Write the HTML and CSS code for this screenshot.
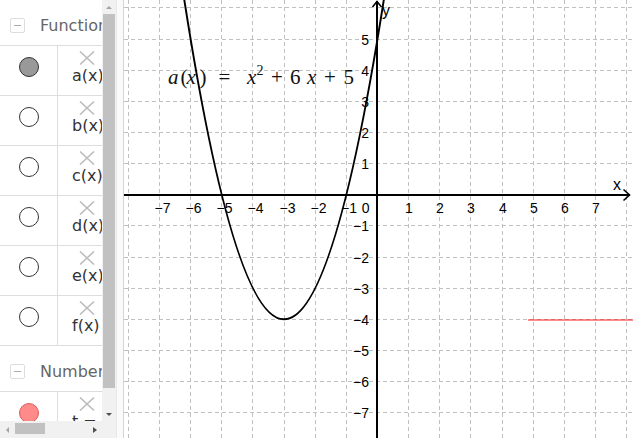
FILE: index.html
```html
<!DOCTYPE html>
<html lang="en">
<head>
    <meta charset="UTF-8">
    <meta name="viewport" content="width=device-width, initial-scale=1.0">
    <title>GeoGebra - Parabola</title>
    <link rel="stylesheet" href="styles.css">
</head>
<body>
    <div class="app">
        <div class="algebra">
            <div class="av-list">
                <div class="group-header">
                    <span class="toggle"></span>
                    <span class="group-title">Functions</span>
                </div>
                <div class="item">
                    <div class="marble-cell"><span class="marble marble-on"></span></div>
                    <div class="item-body">
                        <svg class="delete" viewBox="0 0 16 14"><path d="M1 0.5 L15 13.5 M15 0.5 L1 13.5"/></svg>
                        <div class="formula">a(x) = x² + 6x + 5</div>
                    </div>
                </div>
                <div class="item">
                    <div class="marble-cell"><span class="marble"></span></div>
                    <div class="item-body">
                        <svg class="delete" viewBox="0 0 16 14"><path d="M1 0.5 L15 13.5 M15 0.5 L1 13.5"/></svg>
                        <div class="formula">b(x) = x² + 2x + 1</div>
                    </div>
                </div>
                <div class="item">
                    <div class="marble-cell"><span class="marble"></span></div>
                    <div class="item-body">
                        <svg class="delete" viewBox="0 0 16 14"><path d="M1 0.5 L15 13.5 M15 0.5 L1 13.5"/></svg>
                        <div class="formula">c(x) = x² − 4x + 3</div>
                    </div>
                </div>
                <div class="item">
                    <div class="marble-cell"><span class="marble"></span></div>
                    <div class="item-body">
                        <svg class="delete" viewBox="0 0 16 14"><path d="M1 0.5 L15 13.5 M15 0.5 L1 13.5"/></svg>
                        <div class="formula">d(x) = x² − 2x − 3</div>
                    </div>
                </div>
                <div class="item">
                    <div class="marble-cell"><span class="marble"></span></div>
                    <div class="item-body">
                        <svg class="delete" viewBox="0 0 16 14"><path d="M1 0.5 L15 13.5 M15 0.5 L1 13.5"/></svg>
                        <div class="formula">e(x) = x² + 4x</div>
                    </div>
                </div>
                <div class="item">
                    <div class="marble-cell"><span class="marble"></span></div>
                    <div class="item-body">
                        <svg class="delete" viewBox="0 0 16 14"><path d="M1 0.5 L15 13.5 M15 0.5 L1 13.5"/></svg>
                        <div class="formula">f(x) = x² − 1</div>
                    </div>
                </div>
                <div class="group-header group-header-split">
                    <span class="toggle"></span>
                    <span class="group-title">Numbers</span>
                </div>
                <div class="item">
                    <div class="marble-cell"><span class="marble marble-red"></span></div>
                    <div class="item-body">
                        <svg class="delete" viewBox="0 0 16 14"><path d="M1 0.5 L15 13.5 M15 0.5 L1 13.5"/></svg>
                        <div class="formula">t = −4</div>
                    </div>
                </div>
            </div>

            <div class="vscroll">
                <div class="arrow"><span class="tri tri-up"></span></div>
                <div class="vthumb"></div>
                <div class="spacer"></div>
                <div class="arrow"><span class="tri tri-down"></span></div>
            </div>
            <div class="hscroll">
                <div class="arrow"><span class="tri tri-left"></span></div>
                <div class="hthumb"></div>
                <div class="spacer"></div>
                <div class="arrow"><span class="tri tri-right"></span></div>
            </div>
            <div class="corner"></div>
        </div>

        <div class="splitter"></div>

        <div class="graphics">
            <svg class="plot" width="509" height="438" viewBox="0 0 509 438">
                <g class="grid">
                    <line x1="4.5" y1="0" x2="4.5" y2="438"/>
                    <line x1="35.5" y1="0" x2="35.5" y2="438"/>
                    <line x1="66.5" y1="0" x2="66.5" y2="438"/>
                    <line x1="97.5" y1="0" x2="97.5" y2="438"/>
                    <line x1="128.5" y1="0" x2="128.5" y2="438"/>
                    <line x1="160.5" y1="0" x2="160.5" y2="438"/>
                    <line x1="191.5" y1="0" x2="191.5" y2="438"/>
                    <line x1="222.5" y1="0" x2="222.5" y2="438"/>
                    <line x1="284.5" y1="0" x2="284.5" y2="438"/>
                    <line x1="315.5" y1="0" x2="315.5" y2="438"/>
                    <line x1="346.5" y1="0" x2="346.5" y2="438"/>
                    <line x1="378.5" y1="0" x2="378.5" y2="438"/>
                    <line x1="409.5" y1="0" x2="409.5" y2="438"/>
                    <line x1="440.5" y1="0" x2="440.5" y2="438"/>
                    <line x1="471.5" y1="0" x2="471.5" y2="438"/>
                    <line x1="502.5" y1="0" x2="502.5" y2="438"/>

                    <line x1="0" y1="7.5" x2="509" y2="7.5"/>
                    <line x1="0" y1="39.5" x2="509" y2="39.5"/>
                    <line x1="0" y1="70.5" x2="509" y2="70.5"/>
                    <line x1="0" y1="101.5" x2="509" y2="101.5"/>
                    <line x1="0" y1="132.5" x2="509" y2="132.5"/>
                    <line x1="0" y1="163.5" x2="509" y2="163.5"/>
                    <line x1="0" y1="225.5" x2="509" y2="225.5"/>
                    <line x1="0" y1="257.5" x2="509" y2="257.5"/>
                    <line x1="0" y1="288.5" x2="509" y2="288.5"/>
                    <line x1="0" y1="319.5" x2="509" y2="319.5"/>
                    <line x1="0" y1="350.5" x2="509" y2="350.5"/>
                    <line x1="0" y1="381.5" x2="509" y2="381.5"/>
                    <line x1="0" y1="412.5" x2="509" y2="412.5"/>
                </g>

                <line class="track" x1="404" y1="320" x2="509" y2="320"/>

                <g class="axes">
                    <line x1="253" y1="1" x2="253" y2="438"/>
                    <line x1="0" y1="195" x2="506" y2="195"/>
                    <polyline points="248.5,7 253,1.5 257.5,7"/>
                    <polyline points="499.5,189.5 505.5,195 499.5,200.5"/>
                </g>

                <!-- a(x) = x^2 + 6x + 5 from x=-7 to x=1 as one quadratic bezier -->
                <path class="curve" d="M35.45,-179.05 Q160.05,817.75 284.65,-179.05"/>

                <g class="ticks">
                    <text x="38.5" y="213">−7</text>
                    <text x="69.5" y="213">−6</text>
                    <text x="100.5" y="213">−5</text>
                    <text x="131.5" y="213">−4</text>
                    <text x="163.5" y="213">−3</text>
                    <text x="194.5" y="213">−2</text>
                    <text x="225" y="213">−1</text>
                    <text x="285" y="213">1</text>
                    <text x="316" y="213">2</text>
                    <text x="347" y="213">3</text>
                    <text x="379" y="213">4</text>
                    <text x="410" y="213">5</text>
                    <text x="441" y="213">6</text>
                    <text x="472" y="213">7</text>
                </g>
                <g class="ticks ticks-y">
                    <text x="245.5" y="213">0</text>
                    <text x="245" y="45">5</text>
                    <text x="245" y="76">4</text>
                    <text x="245" y="107">3</text>
                    <text x="245" y="138">2</text>
                    <text x="245" y="169">1</text>
                    <text x="245" y="231">−1</text>
                    <text x="245" y="263">−2</text>
                    <text x="245" y="294">−3</text>
                    <text x="245" y="325">−4</text>
                    <text x="245" y="356">−5</text>
                    <text x="245" y="387">−6</text>
                    <text x="245" y="418">−7</text>
                </g>

                <text class="axis-name" x="489" y="190">x</text>
                <text class="axis-name" x="258" y="16">y</text>

                <text class="eq" y="84"><tspan class="var" x="44">a</tspan><tspan x="56.5">(</tspan><tspan class="var" x="62.5">x</tspan><tspan x="75.5">)</tspan><tspan x="94.5">=</tspan><tspan class="var" x="123">x</tspan><tspan class="sup" x="132.5" y="75">2</tspan><tspan x="147" y="84">+</tspan><tspan x="166">6</tspan><tspan class="var" x="183">x</tspan><tspan x="200">+</tspan><tspan x="219.5">5</tspan></text>
            </svg>
        </div>
    </div>
</body>
</html>
```

FILE: styles.css
```css
* {
    box-sizing: border-box;
}
html, body {
    margin: 0;
    height: 100%;
}
body {
    overflow: hidden;
    background: #fff;
    font-family: "DejaVu Sans", "Noto Sans", sans-serif;
}
.app {
    display: flex;
    height: 438px;
}

/* algebra view */
.algebra {
    width: 116px;
    flex-shrink: 0;
    display: grid;
    grid-template-columns: 102px 14px;
    grid-template-rows: 421px 17px;
}
.av-list {
    overflow: hidden;
}
.group-header {
    height: 45px;
    display: flex;
    align-items: center;
    gap: 15px;
    padding: 6px 0 0 10px;
}
.group-header-split {
    height: 46px;
    border-top: 1px solid #ddd;
}
.toggle {
    width: 15px;
    height: 15px;
    flex-shrink: 0;
    border: 1px solid #ddd;
    border-radius: 2px;
    display: flex;
    align-items: center;
    justify-content: center;
}
.toggle::after {
    content: "";
    width: 7px;
    height: 1px;
    background: #aaa;
}
.group-title {
    font-size: 16px;
    color: #666;
    white-space: nowrap;
}
.item {
    display: flex;
    height: 50px;
    border-top: 1px solid #ddd;
}
.marble-cell {
    width: 58px;
    flex-shrink: 0;
    border-right: 1px solid #ddd;
    padding-top: 11px;
    display: flex;
    justify-content: center;
    align-items: flex-start;
}
.marble {
    width: 20px;
    height: 20px;
    border-radius: 50%;
    border: 1px solid #333;
    background: #fff;
}
.marble-on {
    background: #999;
}
.marble-red {
    background: #ff8a8a;
    border-color: #dd5b5b;
}
.item-body {
    flex: 1;
    min-width: 0;
    padding: 5px 0 0 14px;
    white-space: nowrap;
}
.delete {
    display: block;
    width: 16px;
    height: 14px;
    margin-left: 7px;
    fill: none;
    stroke: #bdbdbd;
    stroke-width: 1.6;
}
.formula {
    font-size: 16px;
    line-height: 21px;
    color: #333;
}

/* scrollbars */
.vscroll {
    background: #f1f1f1;
    display: flex;
    flex-direction: column;
    align-items: center;
}
.hscroll {
    background: #f1f1f1;
    display: flex;
    align-items: center;
}
.corner {
    background: #f1f1f1;
}
.arrow {
    width: 14px;
    height: 14px;
    flex-shrink: 0;
    display: flex;
    align-items: center;
    justify-content: center;
}
.spacer {
    flex: 1;
}
.vthumb {
    width: 12px;
    height: 374px;
    background: #c1c1c1;
}
.hthumb {
    width: 30px;
    height: 11px;
    margin-left: 1px;
    align-self: flex-start;
    margin-top: 2px;
    background: #c1c1c1;
}
.tri {
    width: 0;
    height: 0;
}
.tri-up {
    border-left: 3.5px solid transparent;
    border-right: 3.5px solid transparent;
    border-bottom: 3px solid #a3a3a3;
}
.tri-down {
    border-left: 3.5px solid transparent;
    border-right: 3.5px solid transparent;
    border-top: 3px solid #505050;
}
.tri-left {
    border-top: 3.5px solid transparent;
    border-bottom: 3.5px solid transparent;
    border-right: 3px solid #a3a3a3;
}
.tri-right {
    border-top: 3.5px solid transparent;
    border-bottom: 3.5px solid transparent;
    border-left: 4px solid #505050;
}

.splitter {
    width: 8px;
    flex-shrink: 0;
    background: #fafafa;
    border-left: 1px solid #e8e8e8;
    border-right: 1px solid #d4d4d4;
}

/* graphics view */
.graphics {
    flex: 1;
    overflow: hidden;
}
.plot {
    display: block;
}
.grid line {
    stroke: #c0c0c0;
    stroke-width: 1;
    stroke-dasharray: 4 3;
}
.track {
    stroke: #ff0000;
    stroke-opacity: 0.45;
    stroke-width: 2;
}
.axes line,
.axes polyline {
    stroke: #000;
    stroke-width: 2;
    fill: none;
}
.axes polyline {
    stroke-width: 1.6;
}
.curve {
    fill: none;
    stroke: #000;
    stroke-width: 2;
}
.ticks {
    font-family: "Liberation Sans", Arial, sans-serif;
    font-size: 14px;
    fill: #000;
    text-anchor: middle;
}
.ticks-y {
    text-anchor: end;
}
.axis-name {
    font-family: "Liberation Sans", Arial, sans-serif;
    font-size: 16px;
    fill: #000;
}
.eq {
    font-family: "Liberation Serif", "Times New Roman", serif;
    font-size: 21px;
    fill: #111;
}
.eq .var {
    font-style: italic;
}
.eq .sup {
    font-size: 14px;
}
```
